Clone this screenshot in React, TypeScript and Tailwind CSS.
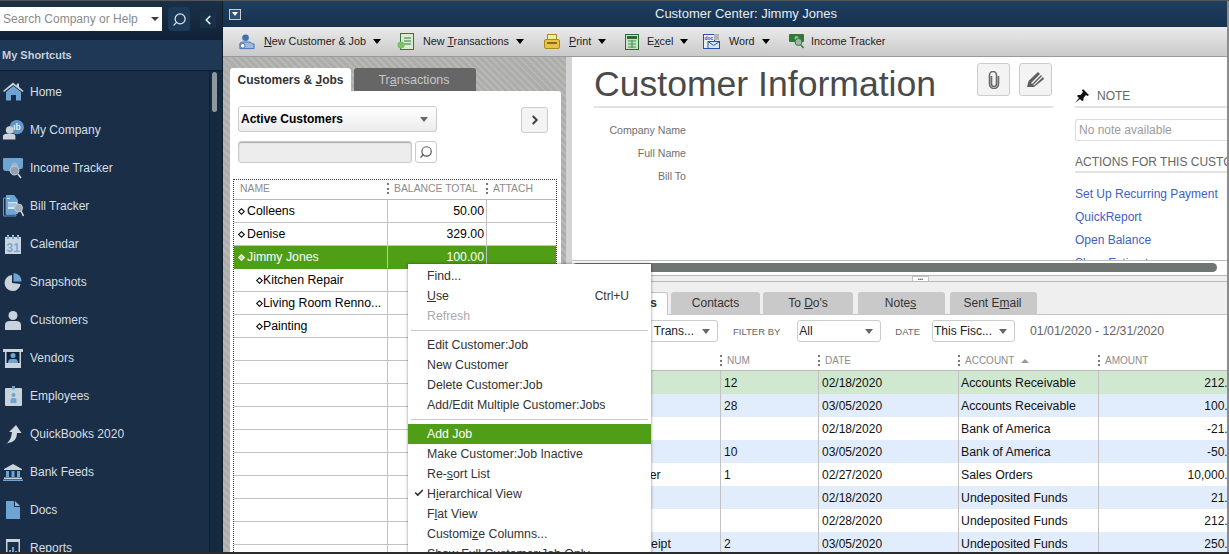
import type { ReactNode } from "react"
import { ChevronLeft, ChevronRight, Search, Check } from "lucide-react"

const font = "font-['Liberation_Sans',Arial,sans-serif]"

// sidebar icons
const HomeIcon = () => (
  <svg width="21" height="20" viewBox="0 0 21 20">
    <path d="M0 9 L10 0.5 L13.5 3.5 L14 1.5 L16 1.5 L16 5 L20.5 9 L19.5 10 L10.3 3 L1 10 Z" fill="#c9d3dc" />
    <path d="M3 10 L10.3 4 L18 10 V18.5 H13 V13 H8 V18.5 H3 Z" fill="#6ea4d4" />
  </svg>
)
const CompanyIcon = () => (
  <svg width="23" height="22" viewBox="0 0 23 22">
    <circle cx="15.5" cy="8" r="7.5" fill="#5f97c9" />
    <text x="11.5" y="11" fontSize="9" fontWeight="700" fontFamily="Liberation Sans" fill="#e6edf3">ıb</text>
    <circle cx="8" cy="11" r="4" fill="#c9d3dc" />
    <path d="M1 21 V18 Q1 15 5 15 H11 Q14 15 14 18 V21 Z" fill="#c9d3dc" />
  </svg>
)
const TrackerIcon = () => (
  <svg width="21" height="21" viewBox="0 0 21 21">
    <path d="M1 0 H19 Q20 0 20 1 V9 Q20 11 18 11 H15 V13 H3 Q0 13 0 10 V1 Q0 0 1 0 Z" fill="#6ea4d4" />
    <circle cx="11.5" cy="8" r="3.5" fill="#9fb2c4" />
    <circle cx="11.5" cy="12.5" r="4.5" fill="#8fa1b2" stroke="#c9d3dc" />
    <path d="M15 16 L18 20" stroke="#d5dde4" strokeWidth="1.5" />
  </svg>
)
const BillIcon = () => (
  <svg width="21" height="22" viewBox="0 0 21 22">
    <path d="M0.5 3 H3 V19.5 H13 V21 H0.5 Z" fill="none" stroke="#5f97c9" />
    <path d="M3 0 H11 L15 5 V19 H3 Z" fill="#6ea4d4" />
    <rect x="4" y="3" width="3" height="1" fill="#dbe5ee" />
    <rect x="5" y="7" width="9" height="7" fill="#d9e3ec" />
    <path d="M5 9 H13 M5 11 H13" stroke="#6ea4d4" />
    <circle cx="15.5" cy="13" r="4" fill="#a0adb9" stroke="#c0cad3" />
    <path d="M18 16 L20.5 21" stroke="#d5dde4" strokeWidth="1.5" />
  </svg>
)
const CalendarIcon = () => (
  <svg width="16" height="19" viewBox="0 0 16 19">
    <path d="M0 2 H2 V0 H4 V2 H7 V0 H9 V2 H12 V0 H14 V2 H16 V19 H0 Z" fill="#c9d6e2" />
    <rect x="2" y="1" width="2" height="3" fill="#6ea4d4" />
    <rect x="7" y="1" width="2" height="3" fill="#6ea4d4" />
    <rect x="12" y="1" width="2" height="3" fill="#6ea4d4" />
    <text x="1.5" y="17" fontSize="12" fontWeight="700" fontFamily="Liberation Sans" fill="#7ea9cf">31</text>
  </svg>
)
const PieIcon = () => (
  <svg width="18" height="18" viewBox="0 0 18 18">
    <path d="M8 2 A8 8 0 1 0 16.5 11 L8 10 Z" fill="#c9d3dc" />
    <path d="M9.5 0 A8 8 0 0 1 17.5 8.5 L9.5 8.5 Z" fill="#6ea4d4" />
  </svg>
)
const PersonIcon = () => (
  <svg width="16" height="19" viewBox="0 0 16 19">
    <circle cx="8" cy="4.5" r="4.5" fill="#c9d3dc" />
    <path d="M0 19 V14 Q0 10 5 10 H11 Q16 10 16 14 V19 Z" fill="#c9d3dc" />
  </svg>
)
const VendorIcon = () => (
  <svg width="20" height="19" viewBox="0 0 20 19">
    <rect x="0" y="0" width="20" height="3" fill="#c9d3dc" />
    <rect x="2" y="3" width="16" height="16" fill="#c9d3dc" />
    <rect x="3.5" y="3" width="13" height="11" fill="#10233a" />
    <circle cx="10" cy="6.5" r="2.5" fill="#6ea4d4" />
    <path d="M5 14 Q5 10 8 10 H12 Q15 10 15 14 Z" fill="#6ea4d4" />
  </svg>
)
const BadgeIcon = () => (
  <svg width="17" height="20" viewBox="0 0 17 20">
    <rect x="7" y="0" width="3" height="4" fill="#6ea4d4" />
    <rect x="0" y="2" width="17" height="18" rx="1" fill="#c9d3dc" />
    <rect x="7" y="0.5" width="3" height="3" fill="#6ea4d4" />
    <circle cx="8.5" cy="9" r="2" fill="#6ea4d4" />
    <path d="M5.5 17 V14 Q5.5 12 7.5 12 H9.5 Q11.5 12 11.5 14 V17 Z" fill="#6ea4d4" />
  </svg>
)
const ArrowIcon = () => (
  <svg width="17" height="19" viewBox="0 0 17 19">
    <path d="M0 19 Q6 17 7 7 H4 L11 0 L16.5 8 H12 Q12 17 3 18 Z" fill="#d0d8df" />
  </svg>
)
const BankIcon = () => (
  <svg width="20" height="17" viewBox="0 0 20 17">
    <path d="M10 0 L19 5 V6 H1 V5 Z" fill="#c9d3dc" />
    <rect x="3" y="7" width="3" height="6" fill="#6ea4d4" />
    <rect x="8.5" y="7" width="3" height="6" fill="#6ea4d4" />
    <rect x="14" y="7" width="3" height="6" fill="#6ea4d4" />
    <rect x="1" y="13.5" width="18" height="1.5" fill="#c9d3dc" />
    <rect x="0" y="15.5" width="20" height="1.5" fill="#6ea4d4" />
  </svg>
)
const DocIcon = () => (
  <svg width="14" height="18" viewBox="0 0 14 18">
    <path d="M0 0 H8 V6 H14 V18 H0 Z" fill="#6ea4d4" />
    <path d="M9 0 L14 5 H9 Z" fill="#8fb6da" />
  </svg>
)
const ReportIcon = () => (
  <svg width="14" height="18" viewBox="0 0 14 18">
    <rect width="14" height="18" fill="#c9d3dc" />
    <rect x="1.5" y="3" width="11" height="13" fill="#1a2f47" />
    <path d="M4 15 V11 M7 15 V8 M10 15 V12" stroke="#6ea4d4" strokeWidth="2" />
  </svg>
)

const shortcuts: [string, ReactNode][] = [
  ["Home", <HomeIcon />],
  ["My Company", <CompanyIcon />],
  ["Income Tracker", <TrackerIcon />],
  ["Bill Tracker", <BillIcon />],
  ["Calendar", <CalendarIcon />],
  ["Snapshots", <PieIcon />],
  ["Customers", <PersonIcon />],
  ["Vendors", <VendorIcon />],
  ["Employees", <BadgeIcon />],
  ["QuickBooks 2020", <ArrowIcon />],
  ["Bank Feeds", <BankIcon />],
  ["Docs", <DocIcon />],
  ["Reports", <ReportIcon />],
]

const Sidebar = () => (
  <aside className="w-[223px] h-full shrink-0 flex flex-col bg-[#1a2f47] border-r border-[#0e1d2d]">
    <div className="h-[39px] shrink-0 pt-[6px] flex items-start bg-gradient-to-b from-[#1b3047] to-[#102237]">
      <div className="w-[162px] h-6 bg-white flex items-center pl-[3px] pr-[3px] justify-between">
        <span className="text-xs text-[#8a8a8a]">Search Company or Help</span>
        <span className="border-x-[4px] border-t-[4px] border-x-transparent border-t-[#3d3d3d]" />
      </div>
      <div className="ml-[6px] w-[22px] h-6 rounded-sm bg-[#1c3a58] flex items-center justify-center">
        <Search size={15} className="text-[#dfe7ee] -scale-x-100" strokeWidth={2} />
      </div>
      <div className="ml-[10px] w-4 h-4 mt-[5px] bg-[#183149] flex items-center justify-center">
        <ChevronLeft size={14} className="text-[#e6ebf0]" strokeWidth={3} />
      </div>
    </div>
    <div className="h-[31px] shrink-0 pl-[2px] flex items-center bg-[#1f3856] border-b border-[#0e1d2d] text-[11px] font-bold text-[#c6d0da]">
      My Shortcuts
    </div>
    <div className="flex-1 min-h-0 flex overflow-hidden">
      <div className="flex-1 min-w-0 flex flex-col pt-[2px] border-r border-[#0f1f30]">
        {shortcuts.map(([label, icon]) => (
          <div key={label} className="h-[38px] shrink-0 flex items-center text-xs text-[#d6dfe6]">
            <span className="w-[22px] ml-[2px] mr-[6px] shrink-0 flex justify-center">{icon}</span>
            <span>{label}</span>
          </div>
        ))}
      </div>
      <div className="w-3 shrink-0 bg-[#152a3f] pl-[2px] pt-[1px]">
        <div className="w-[5px] h-[40px] rounded-sm bg-[#8d97a1]" />
      </div>
    </div>
  </aside>
)

const Caret = ({ className = "border-t-black" }: { className?: string }) => (
  <span className={`inline-block border-x-[4px] border-t-[5px] border-x-transparent ${className}`} />
)

const ToolButton = ({ icon, label, caret = true, width, gap = "mr-[9px]" }: { icon: ReactNode; label: ReactNode; caret?: boolean; width: string; gap?: string }) => (
  <div className={`h-full flex items-center shrink-0 ${width}`}>
    <span className={`w-[17px] h-[18px] shrink-0 flex items-center justify-center ${gap}`}>{icon}</span>
    <span className="text-[10.8px] text-[#222] whitespace-nowrap">{label}</span>
    {caret && <Caret className="ml-[7px] border-t-black" />}
  </div>
)

const UserBlueIcon = () => (
  <svg width="18" height="16" viewBox="0 0 18 16">
    <circle cx="8" cy="3.5" r="3.5" fill="#3f6fb5" />
    <path d="M2 15 V10 Q2 8 5 8 H12 Q14 8 15 10 H17 V15 Z" fill="#9cb9de" stroke="#3f6fb5" />
    <circle cx="5" cy="12" r="2.5" fill="#fff" stroke="#3f6fb5" />
  </svg>
)
const TransIcon = () => (
  <svg width="17" height="17" viewBox="0 0 17 17">
    <rect x="3.5" y="0.5" width="13" height="16" fill="#d8ecd5" stroke="#2f7a3b" />
    <path d="M7 5 H14 M7 8 H14 M7 11 H14" stroke="#2f7a3b" />
    <circle cx="4" cy="12" r="3.5" fill="#79c066" />
  </svg>
)
const PrintIcon = () => (
  <svg width="16" height="15" viewBox="0 0 16 15">
    <rect x="3.5" y="0.5" width="9" height="5" fill="#f4e6a8" stroke="#a98a20" />
    <rect x="0.5" y="5.5" width="15" height="9" rx="1.5" fill="#eac24a" stroke="#a98a20" />
    <rect x="3" y="8" width="10" height="2" fill="#8a6f16" />
  </svg>
)
const ExcelIcon = () => (
  <svg width="14" height="16" viewBox="0 0 14 16">
    <rect x="0.5" y="0.5" width="13" height="15" fill="#cde5c6" stroke="#2c6a36" />
    <rect x="2" y="2" width="10" height="3" fill="#2c6a36" />
    <path d="M3 7 H11 M3 10 H11 M3 13 H11 M7 6 V14" stroke="#3f8f4d" />
  </svg>
)
const WordIcon = () => (
  <svg width="17" height="15" viewBox="0 0 17 15">
    <rect x="0.5" y="0.5" width="11" height="14" fill="#e8eefb" stroke="#2d4fa8" />
    <rect x="11" y="0" width="5" height="6" fill="#b5b5b5" />
    <text x="1.5" y="5.5" fontSize="5" fontWeight="700" fontFamily="Liberation Sans" fill="#2d4fa8">doc</text>
    <rect x="5" y="7.5" width="11.5" height="7" fill="#dde6f8" stroke="#2d4fa8" />
    <path d="M5 7.5 L10.7 11.5 L16.5 7.5" fill="none" stroke="#2d4fa8" />
  </svg>
)
const MoneyIcon = () => (
  <svg width="16" height="15" viewBox="0 0 16 15">
    <rect x="0" y="0" width="15" height="8" rx="1" fill="#2f7a3b" />
    <circle cx="7.5" cy="4" r="2" fill="#8dc57f" />
    <circle cx="9.5" cy="8" r="3.5" fill="#9fb6a6" stroke="#2f7a3b" />
    <path d="M12 11 L14.5 14" stroke="#2f7a3b" strokeWidth="1.5" />
  </svg>
)

const Toolbar = () => (
  <div className="h-[30px] shrink-0 pl-[15px] flex items-center bg-gradient-to-b from-[#ebebeb] to-[#c9c9c9] border-b border-[#9a9a9a]">
    <ToolButton width="w-[159px]" icon={<UserBlueIcon />} label={<><u>N</u>ew Customer &amp; Job</>} />
    <ToolButton width="w-[146px]" icon={<TransIcon />} label={<>New <u>T</u>ransactions</>} />
    <ToolButton width="w-[80px]" icon={<PrintIcon />} label={<><u>P</u>rint</>} />
    <ToolButton width="w-[80px]" gap="mr-[7px]" icon={<ExcelIcon />} label={<>E<u>x</u>cel</>} />
    <ToolButton width="w-[85px]" icon={<WordIcon />} label="Word" />
    <ToolButton width="w-[110px]" gap="mr-[6px]" icon={<MoneyIcon />} label="Income Tracker" caret={false} />
  </div>
)

const Dots = () => <span className="w-[2px] h-[11px] mr-[5px] shrink-0 border-l-2 border-dotted border-[#777]" />

const customers = [
  { name: "Colleens", balance: "50.00" },
  { name: "Denise", balance: "329.00" },
  { name: "Jimmy Jones", balance: "100.00", active: true },
  { name: "Kitchen Repair", sub: true },
  { name: "Living Room Renno...", sub: true },
  { name: "Painting", sub: true },
  ...Array.from({ length: 10 }, () => ({ name: "" })),
] as { name: string; balance?: string; active?: boolean; sub?: boolean }[]

const CustomerList = () => (
  <div className="w-[324px] mt-[16px] ml-[3px] border-l border-t border-r border-dotted border-black/80 bg-white">
    <div className="h-5 pb-[1px] flex items-center text-[10.4px] text-[#8c8c8c] border-b border-[#b9b9b9]">
      <div className="w-[153px] pl-[6px]">NAME</div>
      <div className="w-[99px] flex items-center"><Dots /><span className="whitespace-nowrap">BALANCE TOTAL</span></div>
      <div className="flex-1 flex items-center"><Dots />ATTACH</div>
    </div>
    {customers.map((c, i) => (
      <div key={i} className={`h-[23px] flex text-[12.3px] border-b ${c.active ? "bg-[#4f9e16] text-white border-[#4f9e16]" : "text-black border-[#c2c2c2]"}`}>
        <div className={`w-[154px] flex items-center border-r border-[#c2c2c2] ${c.sub ? "pl-[23px]" : "pl-[5px]"}`}>
          {c.name && <span className={`w-[5px] h-[5px] shrink-0 rotate-45 border border-current bg-white/60 ${c.sub ? "mr-[1px]" : "mr-[3px]"}`} />}
          <span className="whitespace-nowrap">{c.name}</span>
        </div>
        <div className="w-[99px] flex items-center justify-end pr-[2px] border-r border-[#c2c2c2]">{c.balance}</div>
        <div className="flex-1" />
      </div>
    ))}
  </div>
)

const LeftPanel = () => (
  <section className="w-[343px] shrink-0 pl-[7px] pt-[11px] flex flex-col min-h-0 bg-[repeating-linear-gradient(45deg,#adadab_0,#adadab_3px,#b8b8b6_3px,#b8b8b6_5px)]">
    <div className="h-[23px] shrink-0 flex items-end">
      <div className="w-[121px] h-[23px] rounded-t-[3px] bg-white flex items-center justify-center text-xs font-bold text-[#333]">
        <span>Customers &amp; <u>J</u>obs</span>
      </div>
      <div className="ml-[3px] w-[122px] h-[23px] pt-[1px] rounded-t-[3px] bg-[#666] flex items-center justify-center text-[12.5px] text-[#c7c7c7]">
        <span className="-ml-[2px]">Tr<u>a</u>nsactions</span>
      </div>
    </div>
    <div className="w-[331px] flex-1 min-h-0 overflow-hidden rounded-tr-[3px] bg-white">
      <div className="pl-2 pt-[15px] pr-[13px] flex items-start justify-between">
        <div className="w-[199px] h-[26px] pl-[2px] pr-[8px] flex items-center justify-between rounded-[3px] border border-[#ccc] bg-gradient-to-b from-white to-[#ececec] text-xs font-bold text-black">
          Active Customers <Caret className="border-t-[#666]" />
        </div>
        <div className="w-[27px] h-[26px] mt-[1px] rounded-[3px] border border-[#ccc] bg-[#f4f4f4] flex items-center justify-center">
          <ChevronRight size={14} strokeWidth={3.5} className="text-[#444]" />
        </div>
      </div>
      <div className="pl-2 pt-[8px] flex items-center">
        <div className="w-[174px] h-[22px] rounded-[3px] border border-[#c9c9c9] bg-[#ededed] shadow-[inset_0_1px_1px_#aaa]" />
        <div className="ml-[3px] w-[22px] h-[22px] rounded-[3px] border border-[#ccc] bg-white flex items-center justify-center">
          <Search size={14} className="text-[#555] -scale-x-100" />
        </div>
      </div>
      <CustomerList />
    </div>
  </section>
)

const Sash = () => (
  <div className="h-[7px] shrink-0 flex items-center justify-center bg-[#efefef] border-y border-[#b8b8b8]">
    <div className="ml-[42px] w-[17px] h-[5px] flex items-center justify-center border-x border-t border-[#c4c4c4] bg-white text-[5px] leading-none text-[#555]">•••</div>
  </div>
)

const InfoPane = () => (
  <div className="h-[203px] shrink-0 overflow-hidden bg-white flex">
    <div className="w-[483px] shrink-0 pl-[22px] pt-[5px] flex flex-col">
      <div className="w-[459px] h-[46px] border-b-2 border-[#e2e2e2]">
        <h1 className="pt-[1px] text-[35.6px] leading-[42px] text-[#4a4a4a] whitespace-nowrap">Customer Information</h1>
      </div>
      <div className="mt-[16px] flex flex-col gap-[11px] text-[10.6px] leading-[12px] text-[#6f6f6f] w-[92px] text-right">
        <span>Company Name</span>
        <span>Full Name</span>
        <span>Bill To</span>
      </div>
    </div>
    <div className="flex-1 min-w-0 relative">
      <div className="absolute -left-[78px] top-[6px] flex gap-[9px]">
        <div className="w-[33px] h-[33px] rounded-[3px] border border-[#ccc] bg-[#f3f3f3] flex items-center justify-center">
          <svg width="12" height="18" viewBox="0 0 12 18">
            <path d="M3.5 5 V13 a2.5 2.5 0 0 0 5 0 V4 a3.5 3.5 0 0 0 -7 0 V13 a4.5 4.5 0 0 0 9 0 V5" fill="none" stroke="#6a6a6a" strokeWidth="1.6" />
          </svg>
        </div>
        <div className="w-[33px] h-[33px] rounded-[3px] border border-[#ccc] bg-[#f3f3f3] flex items-center justify-center">
          <svg width="17" height="15" viewBox="0 0 17 15">
            <path d="M0 15 L1.5 9 L11 0 L13 2 L4 11 L5 12 L14 3 L15 4 L6 13 L7 13.5 L16 5 L17 7 L7 15 Z" fill="#5d5d5d" />
          </svg>
        </div>
      </div>
      <div className="ml-[20px] mt-[28px] h-[23px] flex items-center border-b-2 border-[#e2e2e2] text-xs text-[#666]">
        <svg width="14" height="14" viewBox="0 0 14 14" className="mr-[8px]"><path d="M8 0 L14 6 L12.5 7 L11 6 L8.5 9 L8.5 11.5 L7 12 L2 7 L3 6 L5.5 6 L8 3 L7 1.5 Z M4 9 L0 14 L5 10 Z" fill="#111" /></svg>
        NOTE
      </div>
      <div className="ml-[20px] mt-[11px] h-[22px] pl-[3px] flex items-center rounded-l-[3px] border border-r-0 border-[#ddd] text-xs text-[#9c9c9c]">No note available</div>
      <div className="ml-[20px] mt-[13px] h-[19px] pt-[1px] border-b-2 border-[#e2e2e2] text-xs leading-[14px] text-[#666] whitespace-nowrap overflow-hidden">ACTIONS FOR THIS CUSTOMER</div>
      <div className="ml-[20px] mt-[14px] flex flex-col gap-[9px] text-xs leading-[14px] text-[#3e5fc4] whitespace-nowrap">
        <span>Set Up Recurring Payment</span>
        <span>QuickReport</span>
        <span>Open Balance</span>
        <span>Show Estimate</span>
      </div>
    </div>
  </div>
)

const tabs = [
  { label: <>Transactions</>, cls: "w-[96px]", active: true },
  { label: <>Contacts</>, cls: "w-[89px] ml-[3px]" },
  { label: <>To <u>D</u>o's</>, cls: "w-[90px] ml-[3px]" },
  { label: <>Note<u>s</u></>, cls: "w-[87px] ml-[5px] pr-[2px]" },
  { label: <>Sent E<u>m</u>ail</>, cls: "w-[87px] ml-[5px] pr-[2px]" },
]

const rows = [
  { type: "Invoice", num: "12", date: "02/18/2020", account: "Accounts Receivable", amount: "212.00", bg: "bg-[#d0e8d0]" },
  { type: "Payment", num: "28", date: "03/05/2020", account: "Accounts Receivable", amount: "100.00", bg: "bg-[#e1ecfc]" },
  { type: "Check", num: "", date: "02/18/2020", account: "Bank of America", amount: "-21.00", bg: "bg-white" },
  { type: "Check", num: "10", date: "03/05/2020", account: "Bank of America", amount: "-50.00", bg: "bg-[#e1ecfc]" },
  { type: "Sales Order", num: "1", date: "02/27/2020", account: "Sales Orders", amount: "10,000.00", bg: "bg-white" },
  { type: "Payment", num: "", date: "02/18/2020", account: "Undeposited Funds", amount: "21.00", bg: "bg-[#e1ecfc]" },
  { type: "Payment", num: "", date: "02/28/2020", account: "Undeposited Funds", amount: "212.00", bg: "bg-white" },
  { type: "Sales Receipt", num: "2", date: "03/05/2020", account: "Undeposited Funds", amount: "250.00", bg: "bg-[#e1ecfc]" },
]

const TransactionsPane = () => (
  <div className="flex-1 min-h-0 overflow-hidden flex flex-col bg-white">
    <div className="h-[33px] shrink-0 pt-[10px] flex bg-[#efefef] border-b border-[#c4c4c4]">
      {tabs.map((t, i) => (
        <div key={i} className={`${t.cls} h-[23px] pb-[2px] shrink-0 rounded-t-[3px] flex items-center justify-center text-xs text-[#333] ${t.active ? "bg-white font-bold border-x border-t border-[#c4c4c4]" : "bg-[#c9c9c9]"}`}>
          <span>{t.label}</span>
        </div>
      ))}
    </div>
    <div className="h-[36px] shrink-0 flex items-start pt-[5px] pl-[22px]">
      <div className="w-[124px] h-[22px] pr-[7px] flex items-center justify-end rounded-[3px] border border-[#ccc] text-xs text-[#222]">
        <span className="mr-[8px]">Trans...</span> <Caret className="border-t-[#666]" />
      </div>
      <span className="ml-[15px] mt-[6px] text-[9.5px] leading-[11px] text-[#666]">FILTER BY</span>
      <div className="ml-[17px] w-[84px] h-[22px] pl-[1px] pr-[7px] flex items-center justify-between rounded-[3px] border border-[#ccc] text-xs text-[#222]">
        All <Caret className="border-t-[#666]" />
      </div>
      <span className="ml-[14px] mt-[6px] text-[9.5px] leading-[11px] text-[#666]">DATE</span>
      <div className="ml-[12px] w-[83px] h-[22px] pl-[1px] pr-[7px] flex items-center justify-between rounded-[3px] border border-[#ccc] text-xs text-[#222]">
        This Fisc... <Caret className="border-t-[#666]" />
      </div>
      <span className="ml-[15px] mt-[4px] text-[12.3px] leading-[14px] text-[#666]">01/01/2020 - 12/31/2020</span>
    </div>
    <div className="h-5 shrink-0 flex items-center text-[10px] text-[#8c8c8c] border-b border-[#b9b9b9]">
      <div className="w-[148px]" />
      <div className="w-[98px] flex items-center"><Dots />NUM</div>
      <div className="w-[140px] flex items-center"><Dots />DATE</div>
      <div className="w-[140px] flex items-center"><Dots />ACCOUNT <span className="ml-[7px] border-x-[4px] border-b-[4px] border-x-transparent border-b-[#999]" /></div>
      <div className="flex-1 flex items-center"><Dots />AMOUNT</div>
    </div>
    {rows.map((r) => (
      <div key={r.date + r.account + r.amount} className={`h-[23px] shrink-0 flex text-xs text-[#111] ${r.bg}`}>
        <div className="w-[149px] pl-[23px] pt-[1px] flex items-center border-r border-[#c2c2c2] whitespace-nowrap text-[12.3px]">{r.type}</div>
        <div className="w-[98px] pl-[3px] pt-[1px] flex items-center border-r border-[#c2c2c2]">{r.num}</div>
        <div className="w-[140px] pl-[3px] pt-[1px] flex items-center border-r border-[#c2c2c2]">{r.date}</div>
        <div className="w-[140px] pl-[2px] pt-[1px] flex items-center border-r border-[#c2c2c2] text-[12.3px]">{r.account}</div>
        <div className="flex-1 pt-[1px] flex items-center justify-end overflow-hidden">
          <span className="mr-[-14px] whitespace-nowrap">{r.amount}</span>
        </div>
      </div>
    ))}
  </div>
)

const menuItems: (string | { label: ReactNode; hint?: string; active?: boolean; disabled?: boolean; check?: boolean })[] = [
  { label: "Find..." },
  { label: <><u>U</u>se</>, hint: "Ctrl+U" },
  { label: "Refresh", disabled: true },
  "sep",
  { label: "Edit Customer:Job" },
  { label: "New Customer" },
  { label: "Delete Customer:Job" },
  { label: "Add/Edit Multiple Customer:Jobs" },
  "sep",
  { label: "Add Job", active: true },
  { label: "Make Customer:Job Inactive" },
  { label: <>Re-<u>s</u>ort List</> },
  { label: <>H<u>i</u>erarchical View</>, check: true },
  { label: <>F<u>l</u>at View</> },
  { label: <>Customi<u>z</u>e Columns...</> },
  { label: "Show Full Customer:Job Only" },
]

const ContextMenu = () => (
  <div className="absolute left-[408px] top-[263px] w-[243px] h-[290px] pt-[2px] overflow-hidden flex flex-col bg-white shadow-[0_0_3px_rgba(0,0,0,0.45)] text-[12.3px] text-[#333]">
    {menuItems.map((m, i) =>
      typeof m === "string" ? (
        <div key={i} className="h-[9px] shrink-0 px-[3px] flex items-center">
          <div className="h-px w-full bg-[#c9c9c9]" />
        </div>
      ) : (
        <div
          key={i}
          className={`h-5 shrink-0 pl-[19px] pr-[22px] flex items-center justify-between ${m.active ? "bg-[#4f9e16] text-white" : ""} ${m.disabled ? "text-[#aaa]" : ""}`}
        >
          <span className="relative">
            {m.check && <Check size={10} strokeWidth={4} className="absolute -left-[13px] top-[3px] text-[#333]" />}
            {m.label}
          </span>
          {m.hint && <span className="text-xs">{m.hint}</span>}
        </div>
      ),
    )}
  </div>
)

export default function App() {
  return (
    <div className={`${font} relative w-[1229px] h-[554px] overflow-hidden flex bg-[#3c3c3c] border-t border-[#555] border-b-2 border-b-[#2b2b2b]`}>
      <Sidebar />
      <main className="flex-1 min-w-0 flex flex-col border-r-2 border-[#8c8c8c] bg-[#b3b3b1]">
        <div className="h-[26px] shrink-0 pl-[6px] flex items-center bg-gradient-to-b from-[#1f3f60] to-[#16314f]">
          <span className="w-[12px] h-[11px] flex items-center justify-center border border-[#ccc] bg-[#33506e]">
            <span className="border-x-[3px] border-t-[4px] border-x-transparent border-t-white" />
          </span>
          <span className="ml-[414px] text-[13px] text-[#e6edf3]">Customer Center: Jimmy Jones</span>
        </div>
        <Toolbar />
        <div className="flex-1 min-h-0 flex">
          <LeftPanel />
          <div className="flex-1 min-w-0 flex flex-col border-l-[6px] border-[#d4d4d4]">
            <InfoPane />
            <div className="h-[15px] shrink-0 pt-[2px] bg-white border-t border-[#bbb]">
              <div className="w-[645px] h-[9px] rounded-full bg-[#6f7573]" />
            </div>
            <Sash />
            <TransactionsPane />
          </div>
        </div>
      </main>
      <ContextMenu />
    </div>
  )
}
